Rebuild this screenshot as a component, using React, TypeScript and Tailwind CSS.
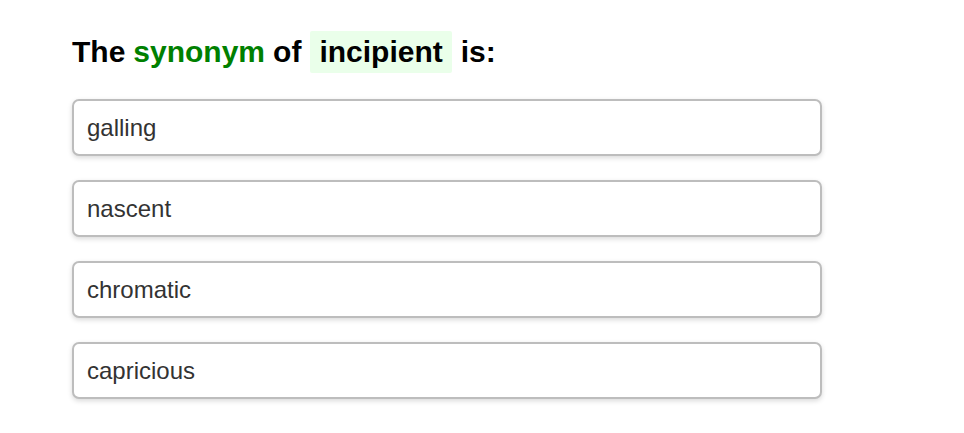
import React from "react";

const options = ["galling", "nascent", "chromatic", "capricious"];

const App = () => {
  return (
    <div className="min-h-screen bg-white pl-[72px] pt-[31px]" style={{ fontFamily: "'Liberation Sans', Arial, sans-serif" }}>
      <h2 className="flex items-center text-[30px] font-bold text-black leading-[42px]">
        <span>The</span>
        <span className="ml-[8px] text-[#008000]">synonym</span>
        <span className="ml-[8px]">of</span>
        <span className="ml-[9px] bg-[#eaffea] px-[9px] rounded-[2px]">incipient</span>
        <span className="ml-[9px]">is:</span>
      </h2>
      <div className="mt-[26px] flex flex-col gap-[24px] w-[750px]">
        {options.map((opt) => (
          <div
            key={opt}
            className="h-[57px] flex items-center px-[13px] border-2 border-[#bdbdbd] rounded-[7px] bg-white shadow-[0_2px_5px_rgba(0,0,0,0.15)] text-[24px] text-[#333]"
          >
            {opt}
          </div>
        ))}
      </div>
    </div>
  );
};

export default App;
